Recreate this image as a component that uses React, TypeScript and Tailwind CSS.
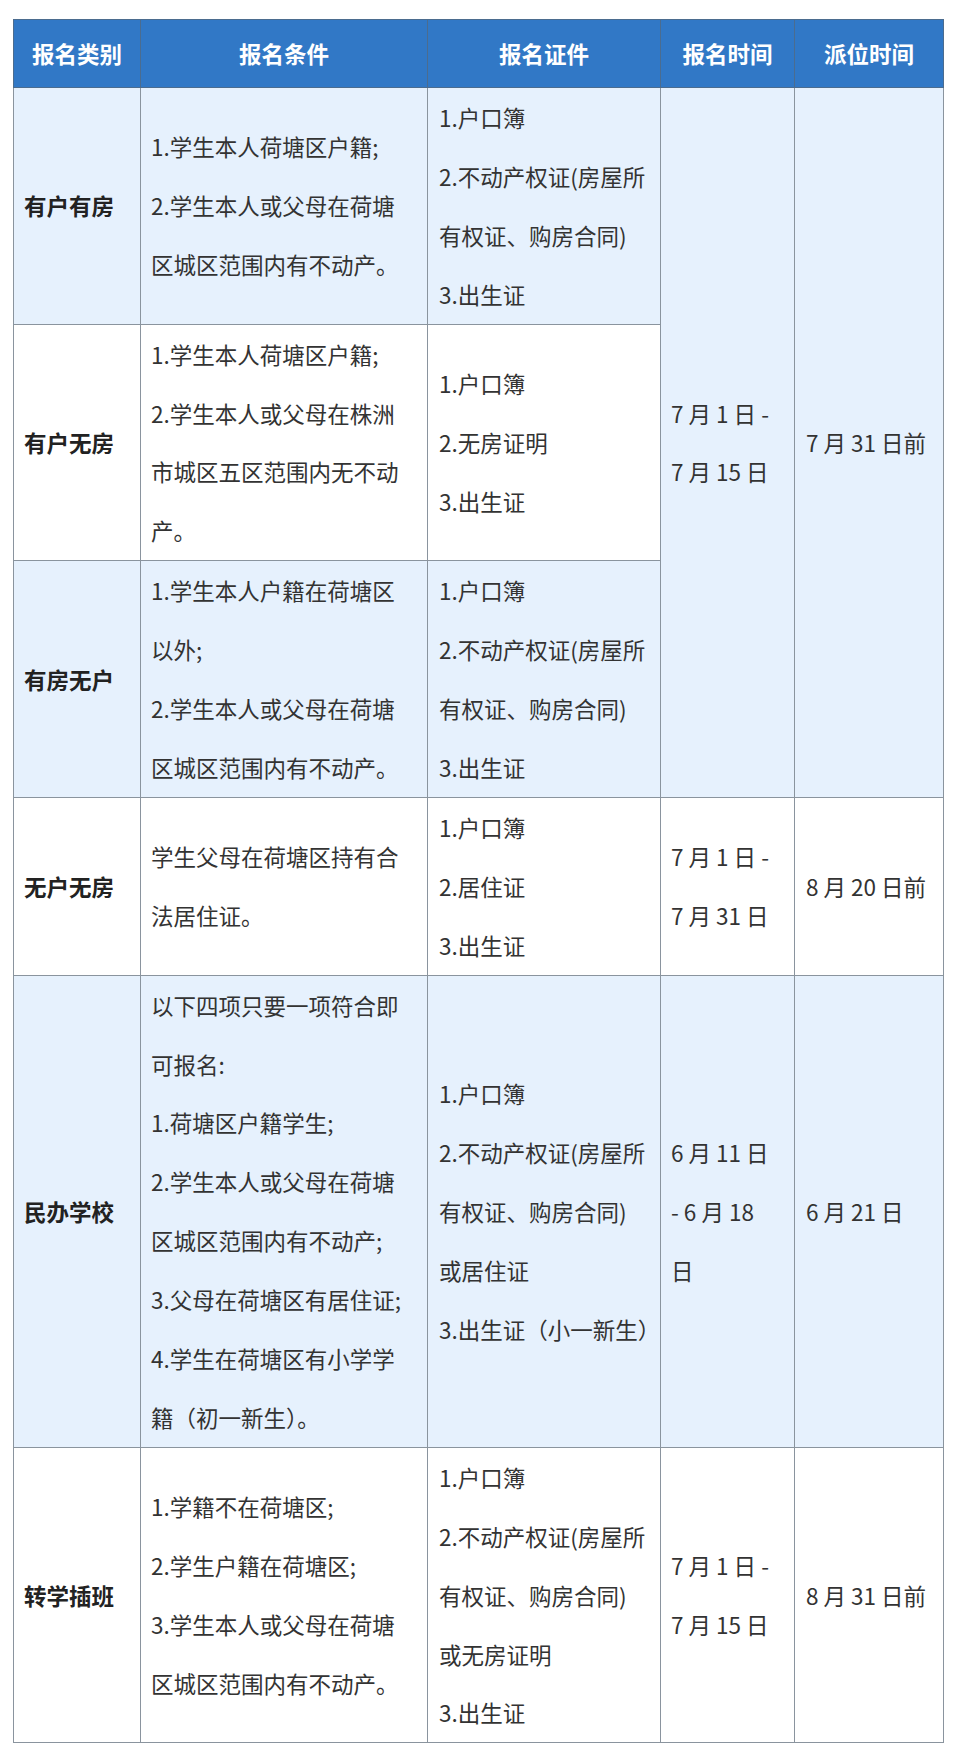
const FONT = '"Noto Sans CJK SC", "Noto Sans", sans-serif';

type Row = {
  label: string;
  cond: string[];
  docs: string[];
  time?: string[];
  span?: number;
  deadline?: string;
  tint: boolean;
};

const rows: Row[] = [
  {
    label: '有户有房',
    cond: ['1.学生本人荷塘区户籍;', '2.学生本人或父母在荷塘', '区城区范围内有不动产。'],
    docs: ['1.户口簿', '2.不动产权证(房屋所', '有权证、购房合同)', '3.出生证'],
    time: ['7 月 1 日 -', '7 月 15 日'],
    span: 3,
    deadline: '7 月 31 日前',
    tint: true,
  },
  {
    label: '有户无房',
    cond: ['1.学生本人荷塘区户籍;', '2.学生本人或父母在株洲', '市城区五区范围内无不动', '产。'],
    docs: ['1.户口簿', '2.无房证明', '3.出生证'],
    tint: false,
  },
  {
    label: '有房无户',
    cond: ['1.学生本人户籍在荷塘区', '以外;', '2.学生本人或父母在荷塘', '区城区范围内有不动产。'],
    docs: ['1.户口簿', '2.不动产权证(房屋所', '有权证、购房合同)', '3.出生证'],
    tint: true,
  },
  {
    label: '无户无房',
    cond: ['学生父母在荷塘区持有合', '法居住证。'],
    docs: ['1.户口簿', '2.居住证', '3.出生证'],
    time: ['7 月 1 日 -', '7 月 31 日'],
    span: 1,
    deadline: '8 月 20 日前',
    tint: false,
  },
  {
    label: '民办学校',
    cond: [
      '以下四项只要一项符合即',
      '可报名:',
      '1.荷塘区户籍学生;',
      '2.学生本人或父母在荷塘',
      '区城区范围内有不动产;',
      '3.父母在荷塘区有居住证;',
      '4.学生在荷塘区有小学学',
      '籍（初一新生）。',
    ],
    docs: ['1.户口簿', '2.不动产权证(房屋所', '有权证、购房合同)', '或居住证', '3.出生证（小一新生）'],
    time: ['6 月 11 日', '- 6 月 18', '日'],
    span: 1,
    deadline: '6 月 21 日',
    tint: true,
  },
  {
    label: '转学插班',
    cond: ['1.学籍不在荷塘区;', '2.学生户籍在荷塘区;', '3.学生本人或父母在荷塘', '区城区范围内有不动产。'],
    docs: ['1.户口簿', '2.不动产权证(房屋所', '有权证、购房合同)', '或无房证明', '3.出生证'],
    time: ['7 月 1 日 -', '7 月 15 日'],
    span: 1,
    deadline: '8 月 31 日前',
    tint: false,
  },
];

const headers = ['报名类别', '报名条件', '报名证件', '报名时间', '派位时间'];

function Lines({ items }: { items: string[] }) {
  return (
    <>
      {items.map((t, i) => (
        <div key={i} className="whitespace-nowrap">
          {t}
        </div>
      ))}
    </>
  );
}

const td = 'border border-[#8a949e] align-middle leading-[58.9px] p-0';

export default function App() {
  return (
    <div className="min-h-[1764px] bg-white pl-[13px] pt-[19px]" style={{ fontFamily: FONT }}>
      <table className="w-[930px] table-fixed border-collapse text-[22.5px] text-[#333]">
        <colgroup>
          <col className="w-[127px]" />
          <col className="w-[287px]" />
          <col className="w-[233px]" />
          <col className="w-[134px]" />
          <col className="w-[149px]" />
        </colgroup>
        <thead>
          <tr className="bg-[#3178c6]">
            {headers.map((h) => (
              <th
                key={h}
                className="h-[68px] border border-[#4b6c8f] text-center align-middle font-bold text-white"
              >
                {h}
              </th>
            ))}
          </tr>
        </thead>
        <tbody>
          {rows.map((r) => (
            <tr key={r.label} className={r.tint ? 'bg-[#e6f1fd]' : 'bg-white'}>
              <td className={`${td} pl-[10px] font-bold text-[#222]`}>{r.label}</td>
              <td className={`${td} pl-[10px]`}>
                <Lines items={r.cond} />
              </td>
              <td className={`${td} pl-[11px]`}>
                <Lines items={r.docs} />
              </td>
              {r.time && (
                <>
                  <td rowSpan={r.span} className={`${td} pl-[10px] bg-[#e6f1fd] ${r.tint ? '' : '!bg-white'}`}>
                    <Lines items={r.time} />
                  </td>
                  <td rowSpan={r.span} className={`${td} pl-[11px] bg-[#e6f1fd] ${r.tint ? '' : '!bg-white'}`}>
                    {r.deadline}
                  </td>
                </>
              )}
            </tr>
          ))}
        </tbody>
      </table>
    </div>
  );
}
